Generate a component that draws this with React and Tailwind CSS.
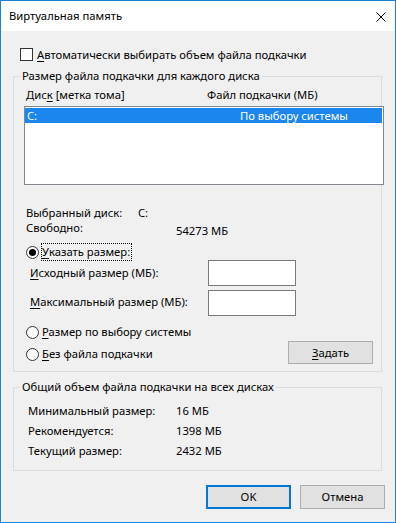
import React from "react";

function U({ children }) {
  return <span className="underline underline-offset-[2px] decoration-[1px]">{children}</span>;
}

function Radio({ checked }) {
  return (
    <span className="w-[13px] h-[13px] shrink-0 rounded-full border border-[#333333] bg-white flex items-center justify-center">
      {checked && <span className="w-[7px] h-[7px] rounded-full bg-black" />}
    </span>
  );
}

export default function App() {
  return (
    <div className="w-[396px] h-[523px] border border-[#1883d7] flex flex-col font-['Noto_Sans',sans-serif] text-[11.25px] leading-[16px] text-black">
      <div className="h-[30px] bg-white flex items-center justify-between pl-[8px] pr-[9px]">
        <span>Виртуальная память</span>
        <svg width="10" height="10" viewBox="0 0 10 10" className="mt-[1px]">
          <path d="M0.5 0.5 L9.5 9.5 M9.5 0.5 L0.5 9.5" stroke="#000" strokeWidth="1" fill="none" />
        </svg>
      </div>
      <div className="flex-1 bg-[#f0f0f0] flex flex-col pl-[12px]">
        <div className="mt-[17px] h-[13px] flex items-center">
          <span className="ml-[7px] w-[13px] h-[13px] border border-[#333333] bg-white shrink-0" />
          <span className="ml-[4px]"><U>А</U>втоматически выбирать объем файла подкачки</span>
        </div>

        <fieldset className="mt-[7px] w-[369px] min-w-0 border border-[#dcdcdc] pl-[6px] pb-[7px] m-0">
          <legend className="px-[2px] leading-[16px]">Размер файла подкачки для каждого диска</legend>
          <div className="mt-[3px] flex h-[16px]">
            <span className="ml-[6px] w-[181px]">Дис<U>к</U> [метка тома]</span>
            <span>Файл подкачки (МБ)</span>
          </div>
          <div className="mt-[3px] ml-[4px] w-[360px] h-[79px] border border-[#828790] bg-white pt-[1px]">
            <div className="h-[15px] mr-[1px] bg-[#1a86ee] text-white flex items-center leading-[15px]">
              <span className="pl-[2px] w-[215px]">C:</span>
              <span>По выбору системы</span>
            </div>
          </div>

          <div className="mt-[20px] h-[15px] flex leading-[15px]">
            <span className="ml-[6px] w-[112px]">Выбранный диск:</span>
            <span>C:</span>
          </div>
          <div className="h-[15px] flex items-start leading-[15px]">
            <span className="ml-[6px] w-[150px]">Свободно:</span>
            <span className="mt-[3px]">54273 МБ</span>
          </div>

          <div className="mt-[9px] h-[16px] flex items-center">
            <span className="ml-[6px]"><Radio checked /></span>
            <span className="ml-[2px] h-[18px] border border-dotted border-black pr-[1px] flex items-center">
              <U>У</U>казать размер:
            </span>
          </div>
          <div className="h-[26px] flex items-center">
            <span className="ml-[10px] w-[178px]"><U>И</U>сходный размер (МБ):</span>
            <span className="w-[88px] h-[26px] border border-[#7a7a7a] bg-white" />
          </div>
          <div className="mt-[4px] h-[26px] flex items-center">
            <span className="ml-[10px] w-[178px] -mt-[2px]"><U>М</U>аксимальный размер (МБ):</span>
            <span className="w-[88px] h-[26px] border border-[#7a7a7a] bg-white" />
          </div>

          <div className="mt-[8px] h-[16px] flex items-center">
            <span className="ml-[6px]"><Radio /></span>
            <span className="ml-[3px]"><U>Р</U>азмер по выбору системы</span>
          </div>
          <div className="mt-[1px] h-[23px] flex items-center">
            <span className="ml-[6px] mt-[3px] flex items-center">
              <Radio />
              <span className="ml-[3px]"><U>Б</U>ез файла подкачки</span>
            </span>
            <button className="ml-auto mr-[8px] w-[85px] h-[23px] bg-[#e1e1e1] border border-[#adadad] flex items-center justify-center">
              <span><U>З</U>адать</span>
            </button>
          </div>
        </fieldset>

        <fieldset className="mt-[7px] w-[369px] min-w-0 border border-[#dcdcdc] pl-[6px] pb-[9px] m-0">
          <legend className="px-[2px] leading-[16px]">Общий объем файла подкачки на всех дисках</legend>
          <div className="mt-[6px] h-[20px] flex items-center">
            <span className="ml-[8px] w-[148px]">Минимальный размер:</span>
            <span>16 МБ</span>
          </div>
          <div className="h-[20px] flex items-center">
            <span className="ml-[8px] w-[148px]">Рекомендуется:</span>
            <span>1398 МБ</span>
          </div>
          <div className="h-[20px] flex items-center">
            <span className="ml-[8px] w-[148px]">Текущий размер:</span>
            <span>2432 МБ</span>
          </div>
        </fieldset>

        <div className="mt-[14px] flex justify-end gap-[9px] pr-[10px]">
          <button className="w-[85px] h-[24px] bg-[#e1e1e1] border-2 border-[#0078d7] flex items-center justify-center">OK</button>
          <button className="w-[85px] h-[24px] bg-[#e1e1e1] border border-[#adadad] flex items-center justify-center">Отмена</button>
        </div>
      </div>
    </div>
  );
}
